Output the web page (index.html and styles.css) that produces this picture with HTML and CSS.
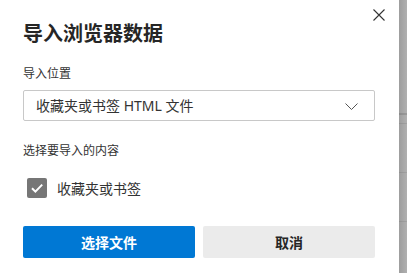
FILE: index.html
```html
<!DOCTYPE html>
<html lang="zh-CN">
<head>
<meta charset="utf-8">
<link rel="stylesheet" href="styles.css">
</head>
<body>
<div class="page">
  <div class="dialog">
    <button class="close" aria-label="关闭">
      <svg width="12" height="12" viewBox="0 0 12 12"><path d="M0.5 0.5 L11.5 11.5 M11.5 0.5 L0.5 11.5" stroke="#333" stroke-width="1.1" fill="none"/></svg>
    </button>
    <h1 class="title">导入浏览器数据</h1>
    <div class="label">导入位置</div>
    <div class="select">
      <span class="select-text">收藏夹或书签 HTML 文件</span>
      <svg class="chev" width="13" height="7" viewBox="0 0 13 7"><path d="M0.5 0.5 L6.5 6.5 L12.5 0.5" stroke="#555" stroke-width="1" fill="none"/></svg>
    </div>
    <div class="label label-2">选择要导入的内容</div>
    <div class="check-row">
      <span class="checkbox">
        <svg width="20" height="20" viewBox="0 0 20 20"><path d="M5 10.2 L8.4 13.6 L15.2 6.6" stroke="#fff" stroke-width="2" fill="none"/></svg>
      </span>
      <span class="check-label">收藏夹或书签</span>
    </div>
    <div class="buttons">
      <button class="btn primary">选择文件</button>
      <button class="btn secondary">取消</button>
    </div>
  </div>
  <div class="backdrop">
    <div class="bd-a"></div>
    <div class="bd-line dark"></div>
    <div class="bd-b"></div>
    <div class="bd-line"></div>
    <div class="bd-c"></div>
    <div class="bd-line"></div>
    <div class="bd-c"></div>
    <div class="bd-line"></div>
    <div class="bd-d"></div>
  </div>
</div>
</body>
</html>
```

FILE: styles.css
```css
* { box-sizing: border-box; }
html, body { margin: 0; padding: 0; }
body {
  font-family: "Noto Sans", "Noto Sans CJK SC", sans-serif;
  color: #333;
  background: #fff;
}
.page {
  display: flex;
  width: 407px;
  height: 273px;
  overflow: hidden;
}
.dialog {
  position: relative;
  width: 399px;
  height: 273px;
  background: #fff;
  padding: 19px 24px 0 23px;
  display: flex;
  flex-direction: column;
}
.close {
  position: absolute;
  top: 9px;
  right: 14px;
  width: 12px;
  height: 12px;
  padding: 0;
  border: 0;
  background: none;
  display: flex;
}
.title {
  margin: 0;
  font-size: 20px;
  line-height: 28px;
  font-weight: 700;
  color: #262626;
  font-family: "Noto Sans CJK SC", sans-serif;
}
.label {
  margin-top: 17px;
  font-size: 12px;
  line-height: 18px;
  color: #333;
  font-family: "Noto Sans CJK SC", sans-serif;
}
.label-2 { margin-top: 20px; }
.select {
  margin-top: 8px;
  height: 31px;
  width: 352px;
  border: 1px solid #c8c8c8;
  border-radius: 2px;
  display: flex;
  align-items: center;
  justify-content: space-between;
  padding: 0 16px 0 12px;
}
.select-text {
  font-size: 14px;
  line-height: 20px;
  color: #333;
}
.chev { display: block; margin-top: 1px; }
.check-row {
  margin-top: 19px;
  display: flex;
  align-items: center;
  gap: 10px;
  padding-left: 4px;
  height: 20px;
}
.checkbox {
  width: 20px;
  height: 20px;
  background: #767676;
  border-radius: 2px;
  display: flex;
}
.check-label {
  font-size: 14px;
  line-height: 20px;
  color: #333;
  font-family: "Noto Sans CJK SC", sans-serif;
}
.buttons {
  margin-top: 28px;
  display: flex;
  gap: 8px;
  width: 352px;
}
.btn {
  flex: 1;
  height: 32px;
  border: 0;
  border-radius: 2px;
  font-size: 14px;
  font-weight: 700;
  font-family: "Noto Sans CJK SC", sans-serif;
  padding: 0;
}
.primary { background: #0078d4; color: #fff; }
.secondary { background: #ebebeb; color: #262626; }
.backdrop {
  width: 8px;
  height: 273px;
  display: flex;
  flex-direction: column;
  background: linear-gradient(to right, #9d9d9d, #b0b0b0);
}
.bd-a { height: 113px; }
.bd-b { height: 8px; }
.bd-c { height: 48px; }
.bd-d { flex: 1; }
.bd-line { height: 1px; background: rgba(0,0,0,0.08); }
.bd-line.dark { height: 2px; background: rgba(0,0,0,0.12); }
```
